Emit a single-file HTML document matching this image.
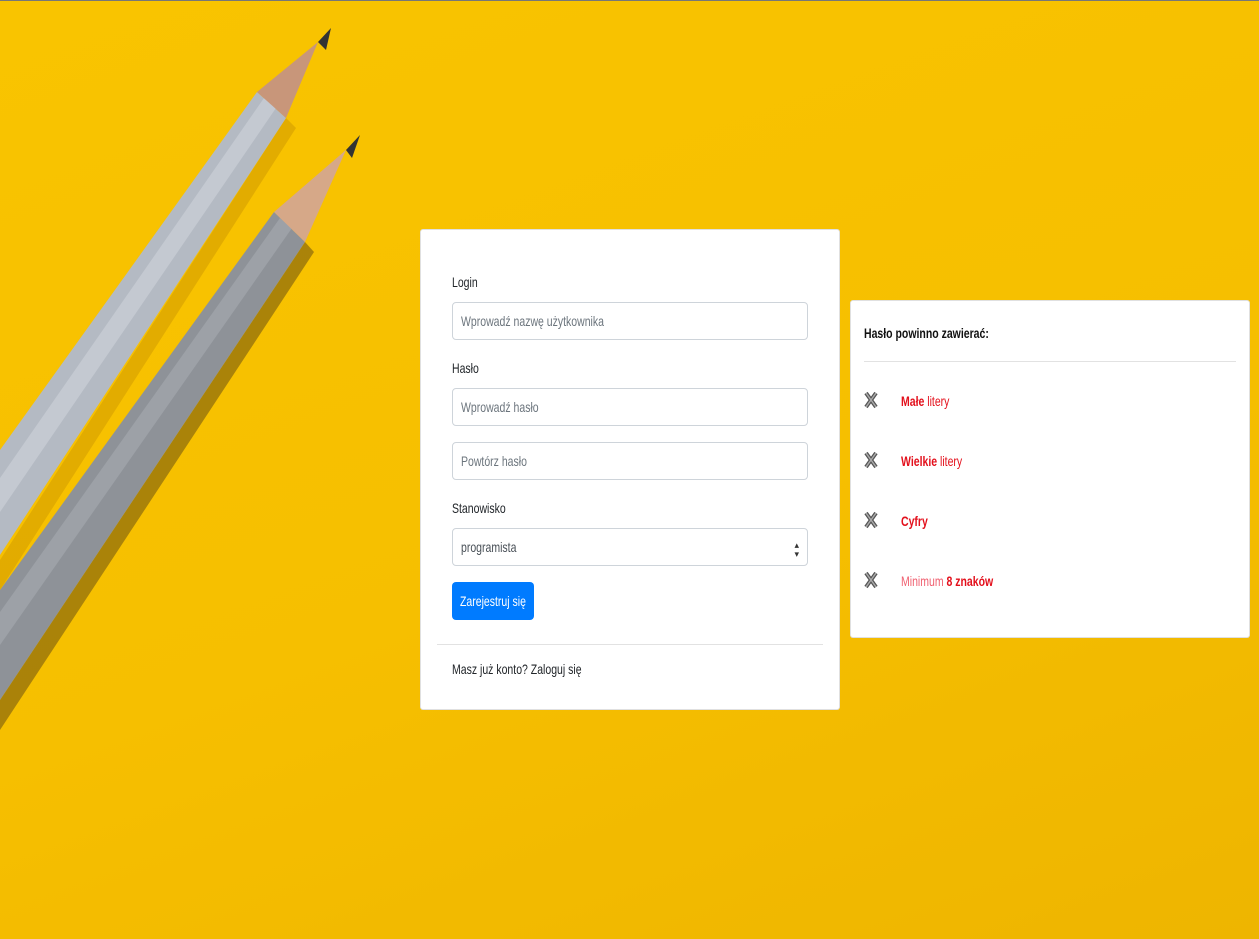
<!DOCTYPE html>
<html><head><meta charset="utf-8"><style>
*{box-sizing:border-box;margin:0;padding:0}
body{width:1259px;height:939px;overflow:hidden;position:relative;font-family:"Liberation Sans",sans-serif;font-size:14px;color:#212529;background:linear-gradient(160deg,#f9c400 0%,#f6bf00 55%,#eeb500 100%)}
.n{display:inline-block;transform:scaleX(.75);transform-origin:left center;white-space:nowrap}
.card{position:absolute;background:#fff;border:1px solid rgba(0,0,0,.12);border-radius:3px}
.lbl{position:absolute;left:31px}
.inp{position:absolute;left:31px;width:356px;height:38px;border:1px solid #ced4da;border-radius:4px;color:#6c757d;padding:0 0 0 8px;line-height:36px}
.btn{position:absolute;left:31px;top:352px;width:82px;height:38px;background:#007bff;border-radius:4px;color:#fff;line-height:38px;padding-left:8px}
.row{position:absolute;left:13px;color:#e3101c}
.x{position:absolute;left:0;top:-2px}
.t{position:absolute;left:37px;top:0}
</style></head><body>
<div style="position:absolute;left:0;top:0;width:1259px;height:1px;background:#777"></div>
<svg width="1259" height="939" style="position:absolute;left:0;top:0">
<polygon points="0,560 286,118 296,128 0,590" fill="#d9a200" opacity=".7"/>
<polygon points="0,700 305,242 314,252 0,730" fill="#6b5010" opacity=".55"/>
<!-- pencil 1 -->
<polygon points="0,450 257,92 286,118 0,555" fill="#b4bac3"/>
<polygon points="0,478 264,98 276,108 0,512" fill="#c4c9d1"/>
<polygon points="257,92 318,42 286,118" fill="#c8967a"/>
<polygon points="318,42 331,28 326,50" fill="#333"/>
<!-- pencil 2 -->
<polygon points="0,590 274,212 305,242 0,700" fill="#8e9298"/>
<polygon points="0,612 280,218 292,228 0,645" fill="#9da1a7"/>
<polygon points="274,212 346,150 305,242" fill="#d6a888"/>
<polygon points="346,150 360,135 352,158" fill="#333"/>
</svg>
<div class="card" style="left:420px;top:229px;width:420px;height:481px">
<div class="lbl" style="top:44px"><span class="n">Login</span></div>
<div class="inp" style="top:72px"><span class="n">Wprowadź nazwę użytkownika</span></div>
<div class="lbl" style="top:130px"><span class="n">Hasło</span></div>
<div class="inp" style="top:158px"><span class="n">Wprowadź hasło</span></div>
<div class="inp" style="top:212px"><span class="n">Powtórz hasło</span></div>
<div class="lbl" style="top:270px"><span class="n">Stanowisko</span></div>
<div class="inp" style="top:298px;color:#495057"><span class="n">programista</span><span style="position:absolute;right:8px;top:12px;font-size:9px;line-height:9px;color:#333">▴<br>▾</span></div>
<div class="btn"><span class="n">Zarejestruj się</span></div>
<div style="position:absolute;left:16px;right:16px;top:414px;height:1px;background:#e2e2e2"></div>
<div class="lbl" style="top:431px"><span class="n">Masz już konto? Zaloguj się</span></div>
</div>
<div class="card" style="left:850px;top:300px;width:400px;height:338px">
<div style="position:absolute;left:13px;top:24px;font-weight:bold;color:#111"><span class="n">Hasło powinno zawierać:</span></div>
<div style="position:absolute;left:13px;right:13px;top:60px;height:1px;background:#e2e2e2"></div>
<div class="row" style="top:92px"><span class="x"><svg width="14" height="18"><path d="M2 2L12 16M12 2L2 16" stroke="#555" stroke-width="4"/><path d="M2 2L12 16M12 2L2 16" stroke="#aaa" stroke-width="1.5"/></svg></span><span class="t n"><b>Małe</b> litery</span></div>
<div class="row" style="top:152px"><span class="x"><svg width="14" height="18"><path d="M2 2L12 16M12 2L2 16" stroke="#555" stroke-width="4"/><path d="M2 2L12 16M12 2L2 16" stroke="#aaa" stroke-width="1.5"/></svg></span><span class="t n"><b>Wielkie</b> litery</span></div>
<div class="row" style="top:212px"><span class="x"><svg width="14" height="18"><path d="M2 2L12 16M12 2L2 16" stroke="#555" stroke-width="4"/><path d="M2 2L12 16M12 2L2 16" stroke="#aaa" stroke-width="1.5"/></svg></span><span class="t n"><b>Cyfry</b></span></div>
<div class="row" style="top:272px"><span class="x"><svg width="14" height="18"><path d="M2 2L12 16M12 2L2 16" stroke="#555" stroke-width="4"/><path d="M2 2L12 16M12 2L2 16" stroke="#aaa" stroke-width="1.5"/></svg></span><span class="t n"><span style="color:#f06070">Minimum</span> <b>8 znaków</b></span></div>
</div>
</body></html>
